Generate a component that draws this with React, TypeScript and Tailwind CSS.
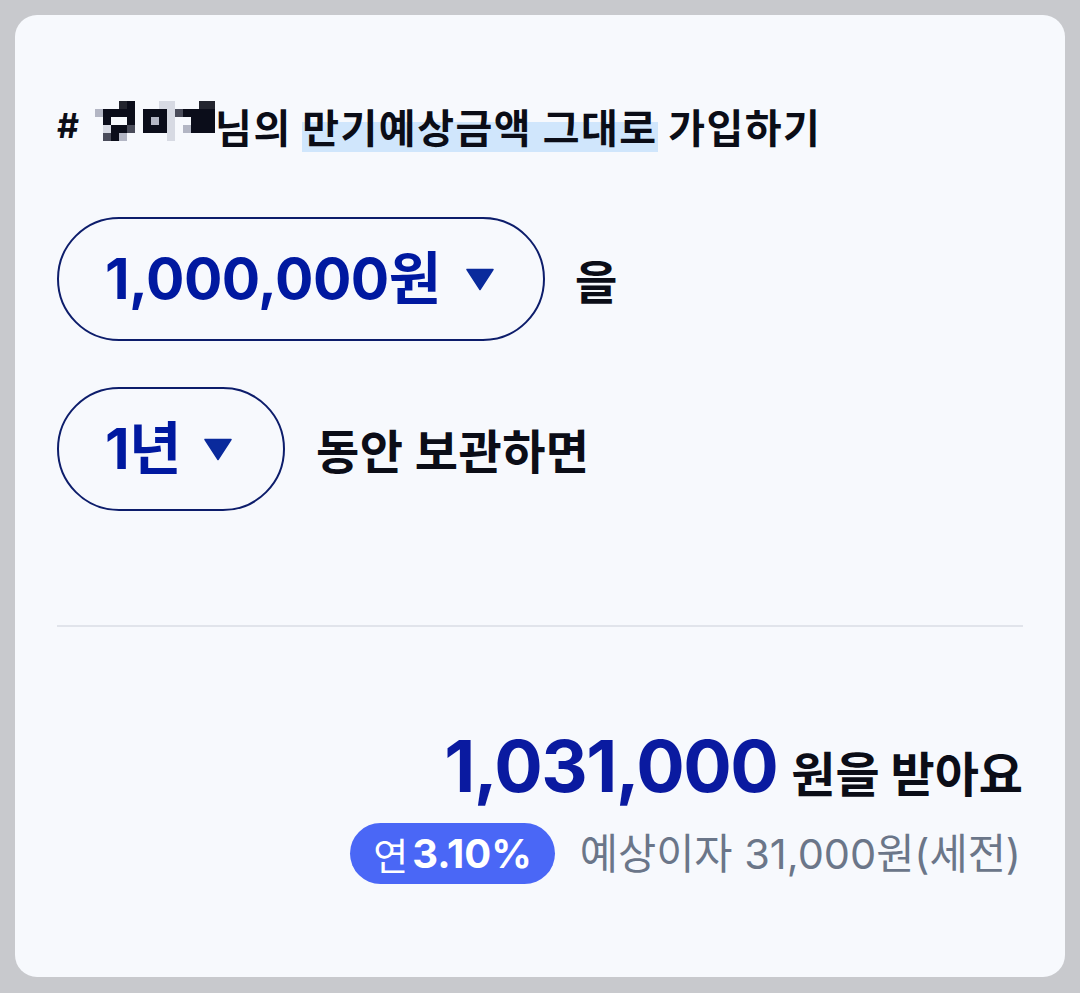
import React from "react";

const D = "#0b0d1a";
const G = "#b3b6c4";
const L = "#d7dae3";
const M = "#4a4c5a";
const K = "#23252f";
const N = "";

const mosaic: string[][] = [
  [N, N, N, K, D, N, N, N, L, L, N, N, N, K, K],
  [G, D, D, D, D, N, D, D, D, L, M, D, D, D, D],
  [N, D, N, N, D, N, D, G, D, L, N, N, D, D, D],
  [N, L, D, D, M, N, D, D, D, L, N, G, D, D, D],
  [N, M, D, G, N, N, N, N, N, L, N, N, N, N, N],
];

function Mosaic() {
  return (
    <span className="inline-grid grid-cols-[repeat(15,8px)] grid-rows-[repeat(5,8px)] ml-[16px] -translate-y-[5px]">
      {mosaic.flatMap((row, r) =>
        row.map((c, i) => (
          <span key={`${r}-${i}`} style={{ backgroundColor: c || "transparent" }} className="block w-[8px] h-[8px]" />
        ))
      )}
    </span>
  );
}

function Caret() {
  return (
    <svg width="30" height="23" viewBox="0 0 30 23" className="shrink-0">
      <path d="M2 1.5 H28 L15 21.5 Z" fill="#0a2a9c" strokeLinejoin="round" stroke="#0a2a9c" strokeWidth="1.5" />
    </svg>
  );
}

export default function App() {
  const kr = { fontFamily: '"Noto Sans CJK KR", sans-serif' };
  const num = { fontFamily: 'Inter, "Noto Sans CJK KR", sans-serif' };
  return (
    <div className="w-[1080px] h-[993px] bg-[#c8c9cd] p-[15px]">
      <div className="w-[1050px] h-[962px] bg-[#f7f9fd] rounded-[22px] pl-[42px] pr-[42px] pt-[87px] flex flex-col" style={kr}>
        <div className="flex items-center text-[40px] font-bold text-[#0b0d17] leading-[48px] h-[48px] tracking-[1.5px]">
          <span style={num} className="text-[34px] tracking-normal">#</span>
          <Mosaic />
          <span>님의&nbsp;</span>
          <span className="bg-[linear-gradient(to_bottom,transparent_40%,#d0e6fc_40%)] pb-[2px] -mb-[2px]">만기예상금액 그대로</span>
          <span>&nbsp;가입하기</span>
        </div>

        <div className="flex items-center mt-[67px]">
          <div className="h-[124px] w-[488px] rounded-full border-2 border-[#0d1d6b] flex items-center pl-[46px] gap-[24px]">
            <span className="text-[57px] font-bold text-[#0019a0] tracking-[-0.5px] leading-[64px]" style={num}>1,000,000원</span>
            <Caret />
          </div>
          <span className="ml-[30px] text-[46px] font-bold text-[#0b0d17]">을</span>
        </div>

        <div className="flex items-center mt-[46px]">
          <div className="h-[124px] w-[228px] rounded-full border-2 border-[#0d1d6b] flex items-center pl-[46px] gap-[22px]">
            <span className="text-[57px] font-bold text-[#0019a0] tracking-[-0.5px] leading-[64px]" style={num}>1년</span>
            <Caret />
          </div>
          <span className="ml-[31px] text-[47px] font-bold text-[#0b0d17] tracking-[0.5px]">동안 보관하면</span>
        </div>

        <div className="mt-[114px] h-[2px] bg-[#e1e4eb] w-full" />

        <div className="mt-[99px] flex items-baseline justify-end h-[80px]">
          <span className="text-[72px] font-bold text-[#0a1aa0] leading-[80px] tracking-[-1.5px]" style={num}>1,031,000</span>
          <span className="ml-[14px] text-[48px] font-bold text-[#0b0d17]">원을 받아요</span>
        </div>

        <div className="mt-[17px] flex items-center justify-end">
          <div className="h-[61px] px-[23px] rounded-full bg-[#4a67f6] flex items-center text-white">
            <span className="text-[38px] font-normal leading-[44px]">연</span>
            <span className="text-[40px] font-bold ml-[4px] leading-[44px]" style={num}>3.10%</span>
          </div>
          <span className="ml-[25px] mr-[2px] text-[41.5px] text-[#6b7689] leading-[48px]" style={num}>예상이자 31,000원(세전)</span>
        </div>
      </div>
    </div>
  );
}
